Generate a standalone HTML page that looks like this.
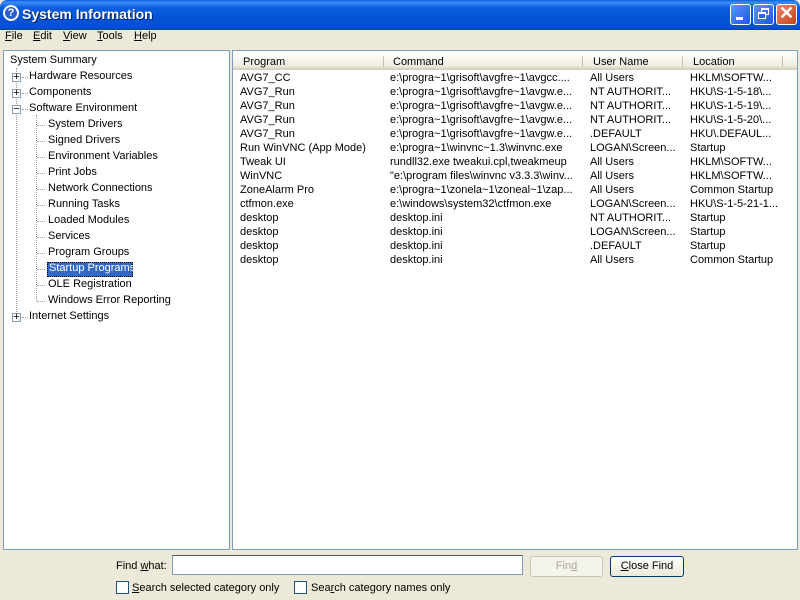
<!DOCTYPE html>
<html><head><meta charset="utf-8"><style>
*{margin:0;padding:0;box-sizing:border-box}
body{width:800px;height:600px;background:#ece9d8;font-family:"Liberation Sans",Tahoma,sans-serif;font-size:11px;color:#000;position:relative;overflow:hidden}
.abs{position:absolute}
#title{left:0;top:0;width:800px;height:30px;background:linear-gradient(#0a5fe6 0%,#3d8ff5 8%,#0c5ee0 25%,#0453d8 60%,#0a50cf 90%,#0843b5 100%);border-radius:7px 7px 0 0}
#title .t{left:22px;top:6px;color:#fff;font-weight:bold;font-size:14px;text-shadow:1px 1px #0a1f70}
#title .ic{left:3px;top:5px;width:16px;height:16px;border-radius:50%;background:#2a5fd0;border:2px solid #fff;color:#fff;font-weight:bold;font-size:11px;text-align:center;line-height:12px}
.wb{top:4px;width:21px;height:21px;border:1px solid #fff;border-radius:3px;background:linear-gradient(135deg,#5e96ff,#1c57e0);}
#menu{left:0;top:30px;width:800px;height:15px}
#menu span{position:absolute;top:0px;font-size:11px}
.pane{background:#fff;border:1px solid #7f9db9}
.tree div{position:absolute;white-space:nowrap;font-size:11px}
.box{position:absolute;width:9px;height:9px;border:1px solid #8a9fb8;background:#fff;font-size:9px;line-height:7px;text-align:center;color:#000}
.dl{position:absolute;border-left:1px dotted #a0a0a0}
.dh{position:absolute;border-top:1px dotted #a0a0a0}
.hdr{position:absolute;top:53px;height:17px;background:linear-gradient(#fff,#f1efe2 80%,#e2decd);border-bottom:2px solid #d6d2c2}
.hdr span{position:absolute;top:3px}
.sep{position:absolute;top:56px;width:1px;height:11px;background:#c7c5b2}
.row{position:absolute;left:240px;height:14px;white-space:nowrap}
.row span{position:absolute;top:0}
.btn{position:absolute;border:1px solid #003c74;border-radius:3px;background:linear-gradient(#fff,#ece9d8);text-align:center;line-height:18px}
.cb{position:absolute;width:13px;height:13px;border:1px solid #1c5180;background:#fff}
</style></head><body>
<div id="title" class="abs"><div class="ic abs">?</div><div class="t abs">System Information</div>
<div class="wb abs" style="left:730px"><div class="abs" style="left:5px;top:12px;width:7px;height:3px;background:#fff"></div></div>
<div class="wb abs" style="left:753px"><div class="abs" style="left:7px;top:3px;width:8px;height:7px;border:1px solid #fff;border-top-width:2px"></div><div class="abs" style="left:4px;top:7px;width:8px;height:7px;border:1px solid #fff;border-top-width:2px;background:#2a64e8"></div></div>
<div class="wb abs" style="left:776px;background:linear-gradient(135deg,#e88a6a,#c8401a)"><div class="abs" style="left:2px;top:-2px;color:#fff;font-size:18px;font-weight:bold">✕</div></div>
</div>
<div id="menu" class="abs"><span style="left:5px"><u>F</u>ile</span><span style="left:33px"><u>E</u>dit</span><span style="left:63px"><u>V</u>iew</span><span style="left:97px"><u>T</u>ools</span><span style="left:134px"><u>H</u>elp</span></div>
<div class="pane abs tree" style="left:3px;top:50px;width:227px;height:500px">
<div style="left:6px;top:3px">System Summary</div>
<div class="dl" style="left:12px;top:17px;height:250px"></div>
<div class="box" style="left:8px;top:22px">+</div><div class="dh" style="left:18px;top:26px;width:6px"></div><div style="left:25px;top:19px">Hardware Resources</div>
<div class="box" style="left:8px;top:38px">+</div><div class="dh" style="left:18px;top:42px;width:6px"></div><div style="left:25px;top:35px">Components</div>
<div class="box" style="left:8px;top:54px">−</div><div class="dh" style="left:18px;top:58px;width:6px"></div><div style="left:25px;top:51px">Software Environment</div>
<div class="dl" style="left:32px;top:64px;height:186px"></div>
<div class="dh" style="left:33px;top:74px;width:8px"></div><div style="left:44px;top:67px">System Drivers</div>
<div class="dh" style="left:33px;top:90px;width:8px"></div><div style="left:44px;top:83px">Signed Drivers</div>
<div class="dh" style="left:33px;top:106px;width:8px"></div><div style="left:44px;top:99px">Environment Variables</div>
<div class="dh" style="left:33px;top:122px;width:8px"></div><div style="left:44px;top:115px">Print Jobs</div>
<div class="dh" style="left:33px;top:138px;width:8px"></div><div style="left:44px;top:131px">Network Connections</div>
<div class="dh" style="left:33px;top:154px;width:8px"></div><div style="left:44px;top:147px">Running Tasks</div>
<div class="dh" style="left:33px;top:170px;width:8px"></div><div style="left:44px;top:163px">Loaded Modules</div>
<div class="dh" style="left:33px;top:186px;width:8px"></div><div style="left:44px;top:179px">Services</div>
<div class="dh" style="left:33px;top:202px;width:8px"></div><div style="left:44px;top:195px">Program Groups</div>
<div class="dh" style="left:33px;top:218px;width:8px"></div><div style="left:43px;top:211px;height:15px;width:86px;background:#316ac5;border:1px dotted #000"></div><div style="left:45px;top:211px;color:#fff">Startup Programs</div>
<div class="dh" style="left:33px;top:234px;width:8px"></div><div style="left:44px;top:227px">OLE Registration</div>
<div class="dh" style="left:33px;top:250px;width:8px"></div><div style="left:44px;top:243px">Windows Error Reporting</div>
<div class="box" style="left:8px;top:262px">+</div><div class="dh" style="left:18px;top:266px;width:6px"></div><div style="left:25px;top:259px">Internet Settings</div>
</div>
<div class="pane abs" style="left:232px;top:50px;width:566px;height:500px"></div>
<div class="hdr" style="left:233px;width:564px">
<span style="left:10px">Program</span><span style="left:160px">Command</span><span style="left:360px">User Name</span><span style="left:460px">Location</span></div>
<div class="sep" style="left:383px"></div><div class="sep" style="left:582px"></div><div class="sep" style="left:682px"></div><div class="sep" style="left:782px"></div>
<div id="rows"></div>
<script>
var d=[["AVG7_CC","e:\\progra~1\\grisoft\\avgfre~1\\avgcc....","All Users","HKLM\\SOFTW..."],
["AVG7_Run","e:\\progra~1\\grisoft\\avgfre~1\\avgw.e...","NT AUTHORIT...","HKU\\S-1-5-18\\..."],
["AVG7_Run","e:\\progra~1\\grisoft\\avgfre~1\\avgw.e...","NT AUTHORIT...","HKU\\S-1-5-19\\..."],
["AVG7_Run","e:\\progra~1\\grisoft\\avgfre~1\\avgw.e...","NT AUTHORIT...","HKU\\S-1-5-20\\..."],
["AVG7_Run","e:\\progra~1\\grisoft\\avgfre~1\\avgw.e...",".DEFAULT","HKU\\.DEFAUL..."],
["Run WinVNC (App Mode)","e:\\progra~1\\winvnc~1.3\\winvnc.exe","LOGAN\\Screen...","Startup"],
["Tweak UI","rundll32.exe tweakui.cpl,tweakmeup","All Users","HKLM\\SOFTW..."],
["WinVNC","\"e:\\program files\\winvnc v3.3.3\\winv...","All Users","HKLM\\SOFTW..."],
["ZoneAlarm Pro","e:\\progra~1\\zonela~1\\zoneal~1\\zap...","All Users","Common Startup"],
["ctfmon.exe","e:\\windows\\system32\\ctfmon.exe","LOGAN\\Screen...","HKU\\S-1-5-21-1..."],
["desktop","desktop.ini","NT AUTHORIT...","Startup"],
["desktop","desktop.ini","LOGAN\\Screen...","Startup"],
["desktop","desktop.ini",".DEFAULT","Startup"],
["desktop","desktop.ini","All Users","Common Startup"]];
var h="";d.forEach(function(r,i){h+='<div class="row" style="top:'+(72+i*14)+'px"><span style="left:0">'+r[0]+'</span><span style="left:150px">'+r[1]+'</span><span style="left:350px">'+r[2]+'</span><span style="left:450px">'+r[3]+'</span></div>'});
document.getElementById("rows").innerHTML=h;
</script>
<div class="abs" style="left:116px;top:560px">Find <u>w</u>hat:</div>
<div class="abs" style="left:172px;top:555px;width:351px;height:20px;background:#fff;border:1px solid #7f9db9;border-top-color:#555"></div>
<div class="btn" style="left:530px;top:556px;width:73px;height:21px;border-color:#c9c7ba;color:#aca899;background:#f5f4ea">Fin<u>d</u></div>
<div class="btn" style="left:610px;top:556px;width:74px;height:21px"><u>C</u>lose Find</div>
<div class="cb" style="left:116px;top:581px"></div><div class="abs" style="left:132px;top:582px"><u>S</u>earch selected category only</div>
<div class="cb" style="left:294px;top:581px"></div><div class="abs" style="left:311px;top:582px">Sea<u>r</u>ch category names only</div>
</body></html>
